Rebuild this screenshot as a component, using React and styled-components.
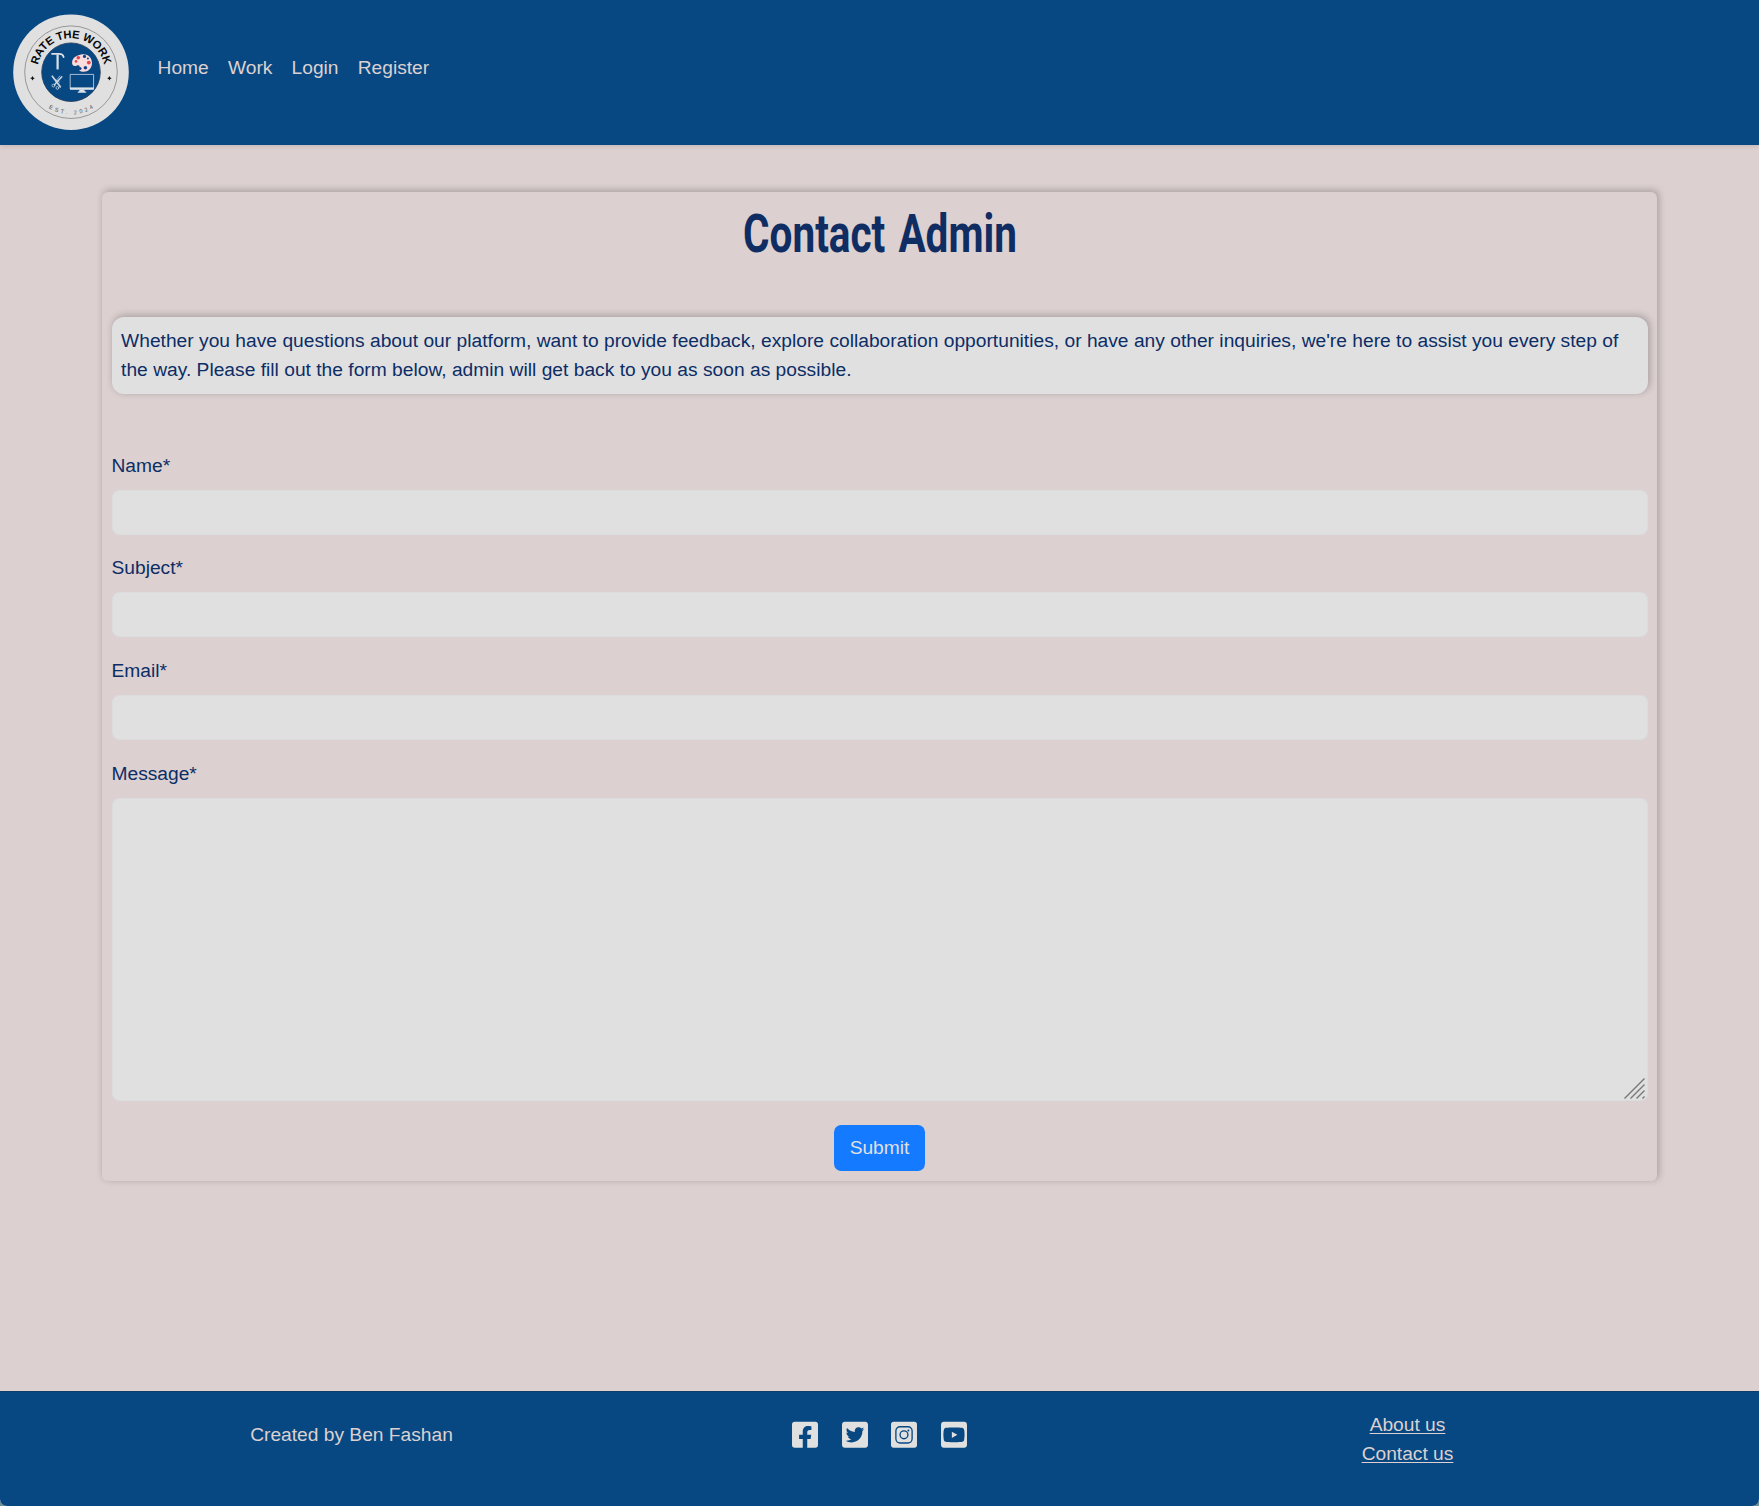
import React from "react";
import styled, { createGlobalStyle } from "styled-components";
import { FaFacebookSquare, FaTwitterSquare, FaYoutubeSquare } from "react-icons/fa";

const colors = {
  bar: "#074883",
  page: "#dcd1d0",
  panel: "#e0e0e0",
  ink: "#0c2d66",
  heading: "#0f2d62",
  primary: "#147aff",
};

const GlobalStyle = createGlobalStyle`
  *, *::before, *::after { box-sizing: border-box; }
  html { background: #6f8f95; }
  body {
    margin: 0;
    font-family: "Liberation Sans", Arial, sans-serif;
    font-size: 19.2px;
    line-height: 28.8px;
    color: ${colors.ink};
  }
`;

const Page = styled.div`
  display: flex;
  flex-direction: column;
  height: 1506px;
  background: ${colors.page};
  border-radius: 0 0 7px 7px;
  overflow: hidden;
`;

const Header = styled.header`
  display: flex;
  align-items: flex-start;
  flex: none;
  height: 145px;
  padding: 14px 13px 0;
  background: ${colors.bar};
  box-shadow: 0 1px 5px rgba(0, 0, 0, 0.14);
`;

const LogoSvg = styled.svg`
  flex: none;
  width: 116px;
  height: 116px;
`;

const Nav = styled.nav`
  display: flex;
  gap: 19.2px;
  padding: 40px 0 0 28.6px;
`;

const NavLink = styled.a`
  color: ${colors.page};
  text-decoration: none;
`;

const Main = styled.main`
  flex: 1;
  padding-top: 47px;
`;

const Card = styled.section`
  width: 1555.2px;
  height: 989px;
  margin: 0 auto;
  padding: 9.6px;
  border-radius: 6px;
  background: ${colors.page};
  box-shadow: 1.2px -1.2px 7.2px rgba(0, 0, 0, 0.23);
`;

const Title = styled.h1`
  margin: 0 0 57.6px;
  height: 57.6px;
  text-align: center;
  font-family: Roboto, "Liberation Sans", sans-serif;
  font-size: 54px;
  font-weight: 700;
  line-height: 57.6px;
  word-spacing: 4px;
  color: ${colors.heading};
  white-space: nowrap;
  transform: translateY(3px) scaleX(0.75);
`;

const Intro = styled.p`
  margin: 0 0 57.6px;
  padding: 10px 9.6px 9.2px;
  border-radius: 12px;
  background: ${colors.panel};
  letter-spacing: 0.014px;
  box-shadow: 1.2px -1.2px 7.2px rgba(0, 0, 0, 0.23);
`;

const Field = styled.div`
  position: relative;
  margin-bottom: ${(p) => (p.$last ? "24px" : "19.2px")};
`;

const Label = styled.label`
  display: block;
  padding-top: 0.4px;
  margin-bottom: 9.2px;
`;

const Input = styled.input`
  display: block;
  width: 100%;
  height: 45.2px;
  padding: 7.2px 14.4px;
  border: 1px solid #dadcde;
  border-radius: 7.2px;
  background: ${colors.panel};
  font: inherit;
  color: inherit;
`;

const TextArea = styled.textarea`
  display: block;
  width: 100%;
  height: 303.4px;
  padding: 7.2px 14.4px;
  border: 1px solid #dadcde;
  border-radius: 7.2px;
  background: ${colors.panel};
  font: inherit;
  color: inherit;
  resize: none;
`;

const Grip = styled.svg`
  position: absolute;
  right: 2.6px;
  bottom: 2.4px;
  width: 21px;
  height: 21px;
`;

const Actions = styled.div`
  display: flex;
  justify-content: center;
`;

const SubmitButton = styled.button`
  height: 46px;
  padding: 0 15.4px;
  border: 0;
  border-radius: 7.2px;
  background: ${colors.primary};
  color: ${colors.panel};
  font: inherit;
`;

const Footer = styled.footer`
  flex: none;
  display: flex;
  justify-content: center;
  height: 115px;
  padding-top: 19px;
  border-top: 1px solid #0d3d6b;
  background: ${colors.bar};
  color: ${colors.page};
`;

const FooterColumn = styled.div`
  display: flex;
  flex-direction: column;
  align-items: center;
  width: 528px;
  padding-top: ${(p) => p.$drop || 0}px;
`;

const FooterLink = styled.a`
  color: ${colors.page};
  text-decoration: underline;
  text-decoration-thickness: 1px;
  text-underline-offset: 2px;
`;

const SocialRow = styled.div`
  display: flex;
  gap: 23.7px;
  color: ${colors.panel};

  svg {
    display: block;
    width: 26px;
    height: 29.7px;
  }
`;

const InstagramSquare = () => (
  <svg viewBox="0 0 448 512">
    <rect y="32" width="448" height="448" rx="48" fill="currentColor" />
    <g fill="none" stroke={colors.bar} strokeWidth="23">
      <rect x="84" y="116" width="280" height="280" rx="72" />
      <circle cx="224" cy="256" r="68" />
    </g>
    <circle cx="300" cy="181" r="17" fill={colors.bar} />
  </svg>
);

const Star = ({ x, y }) => (
  <path
    d={`M${x} ${y - 2.3}L${x + 0.8} ${y - 0.8}L${x + 2.3} ${y}L${x + 0.8} ${y + 0.8}L${x} ${y + 2.3}L${x - 0.8} ${y + 0.8}L${x - 2.3} ${y}L${x - 0.8} ${y - 0.8}Z`}
    fill="#111"
  />
);

function Logo() {
  return (
    <LogoSvg viewBox="13 14 116 116" aria-label="Rate the Work">
      <defs>
        <path id="logo-top" d="M38.4 80.9A33.8 33.8 0 1 1 103.6 80.9" />
        <path id="logo-bottom" d="M28.8 72.2A42.2 42.2 0 0 0 113.2 72.2" />
      </defs>
      <circle cx="71" cy="72.2" r="57.8" fill="#e0e0e0" />
      <circle cx="71" cy="72.2" r="46.3" fill="none" stroke="#777" strokeWidth="0.7" />
      <circle cx="71" cy="72.2" r="29.3" fill="#074883" stroke="#263a5c" strokeWidth="0.8" />
      <text
        fontFamily="Liberation Sans, Arial, sans-serif"
        fontWeight="700"
        fontSize="11.2"
        fill="#080808"
        textAnchor="middle"
      >
        <textPath href="#logo-top" startOffset="50%" textLength="92">
          RATE THE WORK
        </textPath>
      </text>
      <text
        fontFamily="Liberation Sans, Arial, sans-serif"
        fontSize="5.6"
        fill="#555"
        textAnchor="middle"
        letterSpacing="2.7"
      >
        <textPath href="#logo-bottom" startOffset="51%">
          EST. 2024
        </textPath>
      </text>
      <Star x={32.5} y={78.2} />
      <Star x={109.4} y={78.2} />
      <g fill="none" stroke="#dce2e8" strokeLinecap="round">
        <path d="M52 53.8H58.4C61.5 53.6 63.2 54.8 63.6 57" strokeWidth="1.8" />
        <path d="M57.6 54.5V69.4" strokeWidth="2.2" strokeLinecap="butt" />
      </g>
      <path
        d="M81 54.5C87.5 53 92.3 57.5 92 63.5C91.8 68.8 87.5 72.3 82.5 71.7C79.2 71.3 78.6 69.6 79.4 68C80.3 66.1 79 64.7 77 65.6C73.8 67 71.8 65.4 72.1 62C72.5 58 76.4 55.3 81 54.5Z"
        fill="#f9dcdd"
      />
      <circle cx="78.3" cy="57.8" r="1.8" fill="#e9444b" />
      <circle cx="84.5" cy="56.4" r="1.6" fill="#173f87" />
      <circle cx="88.8" cy="62.6" r="1.9" fill="#e9444b" />
      <circle cx="87.9" cy="58.6" r="1" fill="#173f87" />
      <circle cx="80" cy="68.5" r="1.6" fill="#173f87" />
      <circle cx="85.4" cy="67.7" r="1.8" fill="#173f87" />
      <circle cx="76" cy="61.4" r="1.3" fill="#e9444b" />
      <g fill="none" stroke="#c7d5e2" strokeLinecap="round">
        <path d="M52.3 76.2L60.3 86.8" strokeWidth="1.7" />
        <path d="M61.8 76.8L54.5 84.8" strokeWidth="1.5" />
        <path d="M53.4 78.6L59.5 82.2M59.8 76L55.6 81.5" strokeWidth="0.7" />
        <circle cx="53.4" cy="85.6" r="1.4" strokeWidth="0.8" />
        <circle cx="57.4" cy="87.9" r="1.4" strokeWidth="0.8" />
      </g>
      <path d="M70.2 74.4H93.6V89H70.2Z" fill="none" stroke="#bccbdc" strokeWidth="0.9" />
      <path d="M70 87.4H93.8V89.7H70Z" fill="#dce2e8" />
      <path d="M79.6 89.5H84.2L84.8 91.5H86.2V92.7H77.8V91.5H79.1Z" fill="#dce2e8" />
    </LogoSvg>
  );
}

const navItems = ["Home", "Work", "Login", "Register"];
const fields = ["Name*", "Subject*", "Email*"];
const socials = [FaFacebookSquare, FaTwitterSquare, InstagramSquare, FaYoutubeSquare];

export default function App() {
  return (
    <>
      <GlobalStyle />
      <Page>
        <Header>
          <Logo />
          <Nav>
            {navItems.map((item) => (
              <NavLink key={item} href="#">
                {item}
              </NavLink>
            ))}
          </Nav>
        </Header>
        <Main>
          <Card>
            <Title>Contact Admin</Title>
            <Intro>
              Whether you have questions about our platform, want to provide feedback, explore
              collaboration opportunities, or have any other inquiries, we're here to assist you
              every step of the way. Please fill out the form below, admin will get back to you as
              soon as possible.
            </Intro>
            {fields.map((name) => (
              <Field key={name}>
                <Label htmlFor={name}>{name}</Label>
                <Input id={name} />
              </Field>
            ))}
            <Field $last>
              <Label htmlFor="message">Message*</Label>
              <TextArea id="message" />
              <Grip viewBox="0 0 21 21">
                <path
                  d="M.5 20.5L20.5 .5M6.5 20.5L20.5 6.5M12.5 20.5L20.5 12.5M18.5 20.5L20.5 18.5"
                  stroke="#777"
                  strokeWidth="1.4"
                />
              </Grip>
            </Field>
            <Actions>
              <SubmitButton type="button">Submit</SubmitButton>
            </Actions>
          </Card>
        </Main>
        <Footer>
          <FooterColumn $drop={9.6}>Created by Ben Fashan</FooterColumn>
          <FooterColumn $drop={9}>
            <SocialRow>
              {socials.map((Icon, i) => (
                <Icon key={i} />
              ))}
            </SocialRow>
          </FooterColumn>
          <FooterColumn>
            <FooterLink href="#">About us</FooterLink>
            <FooterLink href="#">Contact us</FooterLink>
          </FooterColumn>
        </Footer>
      </Page>
    </>
  );
}
